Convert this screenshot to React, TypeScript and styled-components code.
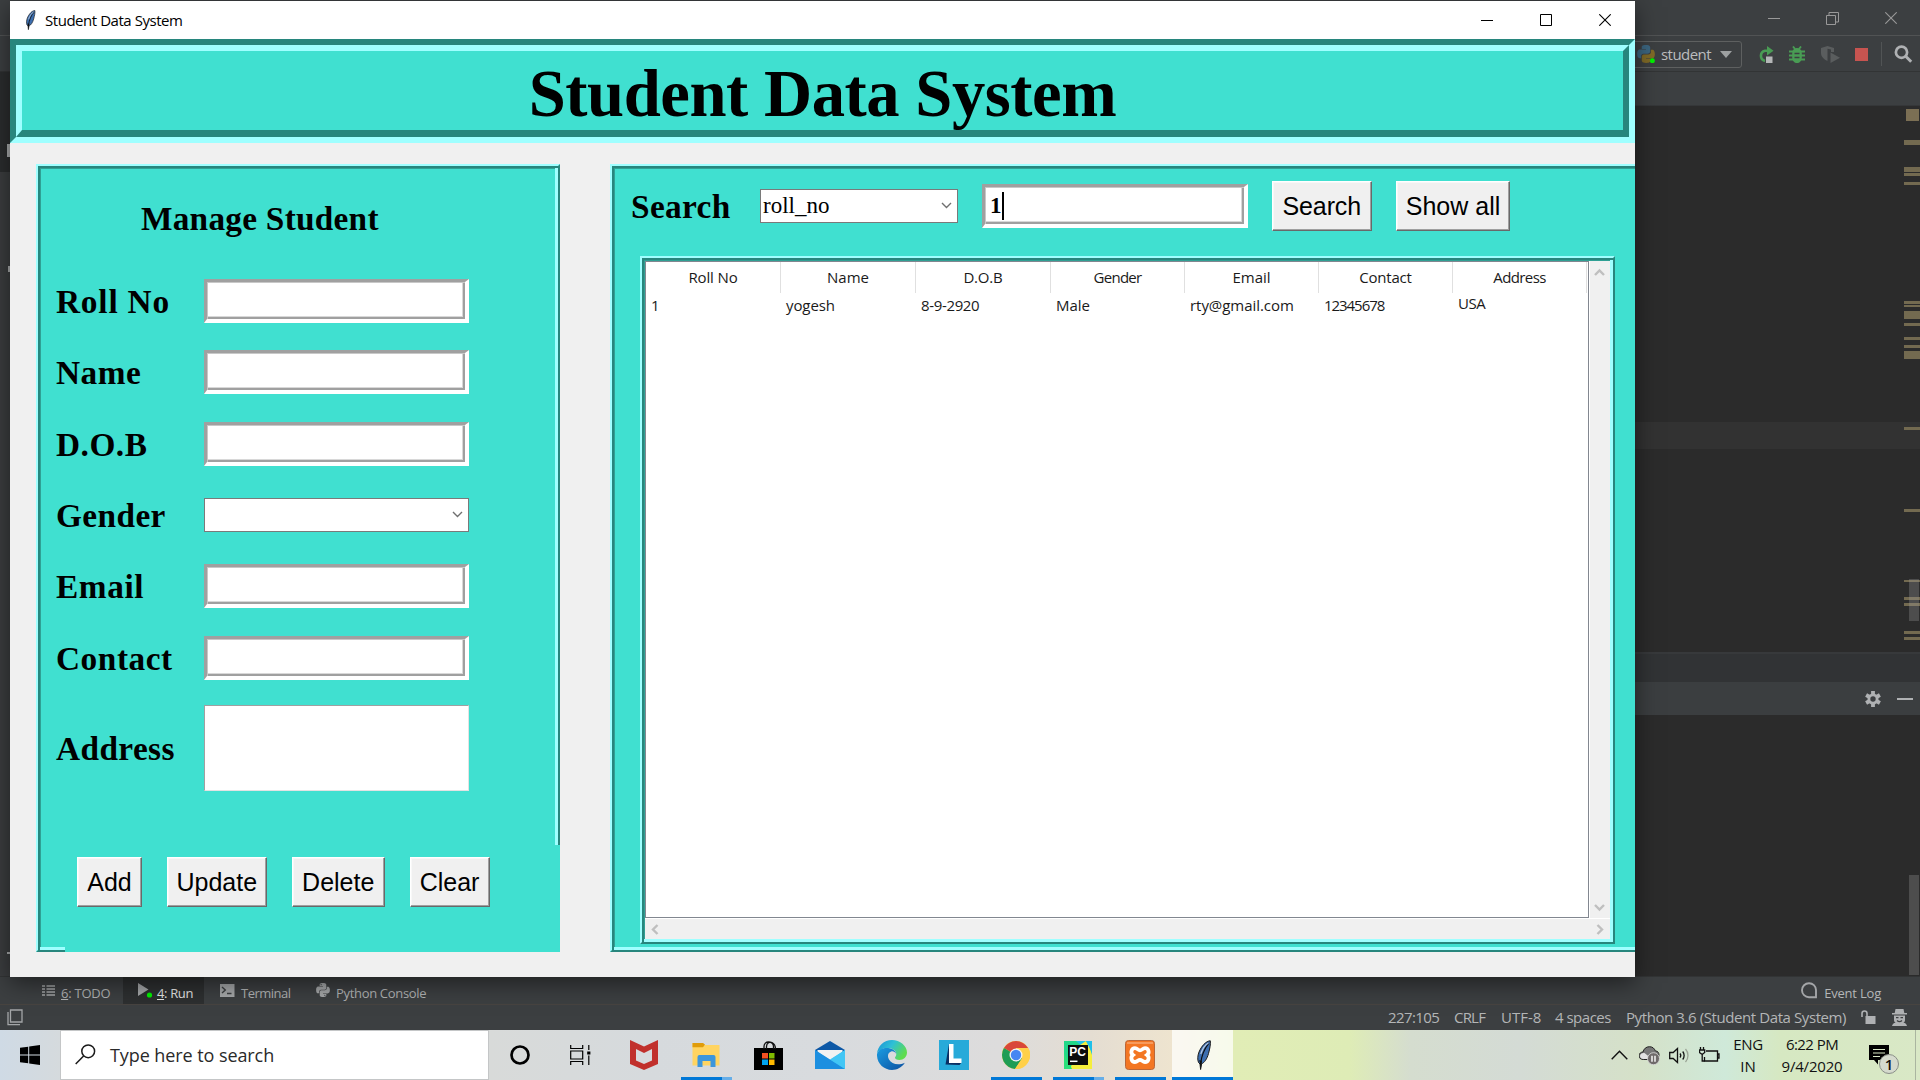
import React from 'react';
import styled, { createGlobalStyle, css } from 'styled-components';

const UI = '"Open Sans", "Noto Sans", sans-serif';
const SERIF = '"Liberation Serif", "Times New Roman", serif';
const SANS = '"Liberation Sans", Arial, sans-serif';
const TEAL = '#40e0d0';
const TEAL_DARK = '#27867d';
const TEAL_LIGHT = '#9fffff';

const Global = createGlobalStyle`
  *, *::before, *::after { box-sizing: border-box; }
  html, body { margin: 0; padding: 0; }
  body { width: 1920px; height: 1080px; overflow: hidden; background: #2b2b2b; }
  svg { display: block; flex: none; }
`;

const Text = styled.span<{ $ls?: number }>`
  display: block;
  flex: none;
  white-space: pre;
  letter-spacing: ${(p) => p.$ls ?? 0}px;
`;

/* ---------- Desktop ---------- */

const Desktop = styled.div`
  position: relative;
  width: 1920px;
  height: 1080px;
  display: flex;
  flex-direction: column;
  overflow: hidden;
`;

/* ---------- IDE behind the window ---------- */

const Ide = styled.div`
  height: 1030px;
  display: flex;
  flex-direction: column;
  background: #3c3f41;
  font-family: ${UI};
  color: #b4b6b7;
`;

const IdeTitle = styled.div`
  height: 36px;
  border-bottom: 1px solid #515354;
  display: flex;
  justify-content: flex-end;
  padding: 12px 23px 0 0;
  gap: 46px;
`;

const IdeToolbar = styled.div`
  height: 36px;
  border-bottom: 1px solid #323435;
  display: flex;
  align-items: center;
  justify-content: flex-end;
  padding: 1px 7px 0 0;
`;

const RunConfig = styled.div`
  width: 130px;
  height: 27px;
  border: 1px solid #5e6060;
  border-radius: 3px;
  display: flex;
  align-items: center;
  justify-content: flex-end;
  padding-right: 9px;
  font-size: 15px;
  line-height: 20px;
  margin-right: 15px;
  color: #bbbdbe;
`;

const ToolIcon = styled.div<{ $w: number; $gap?: number }>`
  width: ${(p) => p.$w}px;
  margin-right: ${(p) => p.$gap ?? 0}px;
  flex: none;
`;

const ToolSeparator = styled.div`
  width: 1px;
  height: 24px;
  background: #515455;
  margin-right: 12px;
`;

const IdeTabs = styled.div`
  height: 34px;
  border-bottom: 1px solid #353739;
`;

const IdeMain = styled.div`
  height: 870px;
  display: flex;
`;

const LeftStripe = styled.div`
  width: 10px;
  margin-top: -34px;
  background: #3b3d3f;
  display: flex;
  flex-direction: column;
  align-items: flex-end;
`;

const StripeSelected = styled.div`
  width: 10px;
  height: 100px;
  background: #2b2d2e;
  display: flex;
  align-items: flex-end;
  justify-content: flex-end;
  padding-bottom: 15px;
`;

const StripeGlyph = styled.div<{ $w: number; $h: number; $mt: number }>`
  width: ${(p) => p.$w}px;
  height: ${(p) => p.$h}px;
  margin-top: ${(p) => p.$mt}px;
  background: #aaacad;
`;

const IdeColumn = styled.div`
  flex: 1;
  display: flex;
  flex-direction: column;
`;

const Editor = styled.div`
  position: relative;
  height: 546px;
  background: #2b2b2b;
  padding-top: 316px;
`;

const CaretLine = styled.div`
  height: 27px;
  background: #323232;
`;

const Mark = styled.div<{ $y: number; $h: number }>`
  position: absolute;
  right: 0;
  top: ${(p) => p.$y - 106}px;
  width: 16px;
  height: ${(p) => p.$h}px;
  background: #736a50;
`;

const StatusSquare = styled.div`
  position: absolute;
  right: 1px;
  top: 3px;
  width: 13px;
  height: 12px;
  background: #7b6f54;
`;

const EditorThumb = styled.div`
  position: absolute;
  right: 1px;
  top: 473px;
  width: 10px;
  height: 42px;
  background: rgba(166, 166, 166, 0.28);
`;

const RunTabs = styled.div`
  height: 30px;
  border-top: 2px solid #37393b;
  background: #313335;
`;

const RunHeader = styled.div`
  height: 33px;
  background: #3b3e40;
  display: flex;
  align-items: center;
  justify-content: flex-end;
  gap: 16px;
  padding: 1px 7px 0 0;
`;

const Console = styled.div`
  flex: 1;
  background: #2b2b2b;
  display: flex;
  justify-content: flex-end;
  align-items: flex-end;
  padding: 0 1px 1px 0;
`;

const ConsoleThumb = styled.div`
  width: 10px;
  height: 100px;
  background: #4d4d4d;
`;

const ToolTabs = styled.div`
  height: 29px;
  border-top: 1px solid #323435;
  border-bottom: 1px solid #484440;
  display: flex;
  align-items: center;
  font-size: 13px;
  line-height: 18px;
  padding-left: 26px;
  padding-right: 39px;
`;

const ToolTab = styled.div<{ $w: number; $active?: boolean; $gap: number }>`
  width: ${(p) => p.$w}px;
  height: 27px;
  padding: 4px 0 0 ${(p) => (p.$active ? 15 : 16)}px;
  display: flex;
  align-items: center;
  gap: ${(p) => p.$gap}px;
  background: ${(p) => (p.$active ? '#2d2f30' : 'transparent')};
  color: ${(p) => (p.$active ? '#e4e4e4' : '#b0b2b3')};
`;

const TabIcon = styled.div`
  margin-top: -5px;
`;

const EventLog = styled.div`
  margin-left: auto;
  display: flex;
  align-items: center;
  gap: 6px;
  padding-top: 4px;
`;

const StatusBar = styled.div`
  height: 25px;
  display: flex;
  align-items: center;
  font-size: 15px;
  line-height: 20px;
  padding: 0 12px 1px 7px;
`;

const StatusItem = styled(Text)<{ $w: number }>`
  width: ${(p) => p.$w}px;
`;

const Fill = styled.div`
  flex: 1;
`;

/* ---------- Tk window ---------- */

const Window = styled.div`
  position: absolute;
  left: 10px;
  top: 1px;
  width: 1625px;
  height: 976px;
  background: #f0f0f0;
  display: flex;
  flex-direction: column;
  overflow: hidden;
`;

const WindowShadow = styled.div`
  position: absolute;
  left: 10px;
  top: 1px;
  width: 1625px;
  height: 976px;
  box-shadow: 0 6px 22px rgba(0, 0, 0, 0.5);
`;

const TitleBar = styled.div`
  height: 38px;
  flex: none;
  background: #fff;
  display: flex;
  align-items: center;
  padding: 0 24px 1px 14px;
  font: 15px/20px ${UI};
  color: #000;
`;

const WindowControls = styled.div`
  margin-left: auto;
  display: flex;
  align-items: center;
  gap: 47px;
  padding-top: 1px;
`;

const Banner = styled.div`
  height: 104px;
  flex: none;
  border: 6px solid;
  border-color: ${TEAL_DARK} ${TEAL_LIGHT} ${TEAL_LIGHT} ${TEAL_DARK};
`;

const BannerInner = styled.div`
  height: 92px;
  border: 6px solid;
  border-color: ${TEAL_LIGHT} ${TEAL_DARK} ${TEAL_DARK} ${TEAL_LIGHT};
  border-bottom-width: 7px;
  background: ${TEAL};
  display: flex;
  align-items: center;
  justify-content: center;
  padding-top: 6px;
  font: bold 66.67px/72px ${SERIF};
  color: #000;
`;

const Panels = styled.div`
  flex: 1;
  display: flex;
  gap: 50px;
  padding: 21px 0 0 26px;
`;

const ridge = css`
  border: 2px solid;
  border-color: ${TEAL_LIGHT} ${TEAL_DARK} ${TEAL_DARK} ${TEAL_LIGHT};
  box-shadow: inset 2px 2px 0 ${TEAL_DARK}, inset -3px -3px 0 ${TEAL_LIGHT}, inset 3px 3px 0 #2fa094;
  background: ${TEAL};
`;

const ManagePanel = styled.div`
  ${ridge}
  width: 524px;
  height: 788px;
  flex: none;
  display: flex;
  flex-direction: column;
  font: bold 33.33px/38px ${SERIF};
  color: #000;
`;

const PanelTitle = styled.div`
  height: 99.3px;
  display: flex;
  align-items: center;
  padding: 6px 0 0 103px;
`;

const FormRow = styled.div<{ $h?: number }>`
  height: ${(p) => p.$h ?? 71.35}px;
  flex: none;
  display: flex;
  align-items: center;
  padding-left: 18px;
`;

const FormLabel = styled.div`
  width: 148px;
  flex: none;
  padding-top: 2px;
`;

const Entry = styled.div<{ $w?: number }>`
  width: ${(p) => p.$w ?? 265}px;
  height: 44px;
  flex: none;
  background: #fff;
  border: solid;
  border-width: 3px 4px 4px 3px;
  border-color: #a0a0a0 #fff #fff #a0a0a0;
  box-shadow: inset 1px 1px 0 #c8c8c8, inset -2px -2px 0 #a0a0a0, inset -3px -3px 0 #d8d8d8;
  display: flex;
  align-items: center;
  padding-left: 5px;
  font: bold 23px/26px ${SERIF};
`;

const Caret = styled.div`
  width: 2px;
  height: 28px;
  background: #000;
`;

const Combo = styled.div<{ $w: number }>`
  width: ${(p) => p.$w}px;
  height: 34px;
  flex: none;
  border: 1px solid #7a7a7a;
  background: #fff;
  display: flex;
  align-items: center;
  justify-content: space-between;
  padding: 0 5px 1px 2px;
  font: 23px/26px ${SERIF};
`;

const TextArea = styled.div`
  width: 265px;
  height: 86px;
  background: #fff;
  border: 1px solid;
  border-color: #a0a0a0 #e3e3e3 #e3e3e3 #a0a0a0;
`;

const ButtonFrame = styled.div`
  height: 107px;
  margin: auto -2px -2px 27px;
  background: ${TEAL};
  display: flex;
  gap: 24.5px;
  padding: 12px 0 0 12px;
`;

const Button = styled.div<{ $w: number }>`
  width: ${(p) => p.$w}px;
  height: 50px;
  flex: none;
  background: #f0f0f0;
  border: solid;
  border-width: 1px 1px 1px 1px;
  border-color: #fff #696969 #696969 #fff;
  box-shadow: inset -1px -1px 0 #a0a0a0, inset 1px 1px 0 #f8f8f8;
  display: flex;
  align-items: center;
  justify-content: center;
  font: 25px/28px ${SANS};
  color: #000;
`;

const DetailPanel = styled.div`
  ${ridge}
  width: 1040px;
  height: 788px;
  flex: none;
`;

const SearchBar = styled.div`
  height: 80px;
  display: flex;
  align-items: center;
  padding-left: 19px;
  font: bold 33.33px/38px ${SERIF};
  color: #000;
`;

const SearchLabel = styled.div`
  width: 129px;
  padding-top: 2px;
`;

const Gap = styled.div<{ $w: number }>`
  width: ${(p) => p.$w}px;
  flex: none;
`;

const TableFrame = styled.div`
  ${ridge}
  width: 975px;
  height: 688px;
  margin: 10px 0 0 28px;
  padding: 3px;
  display: grid;
  grid-template-columns: 944px 21px;
  grid-template-rows: 657px 21px;
`;

const Tree = styled.div`
  border: 1px solid #828790;
  background: #fff;
  font: 15px/20px ${UI};
  color: #1a1a1a;
`;

const TreeRow = styled.div<{ $h: number }>`
  display: grid;
  grid-template-columns: repeat(3, 135px) repeat(4, 134px);
  height: ${(p) => p.$h}px;
`;

const HeadCell = styled.div`
  border-right: 1px solid #e0e0e0;
  display: flex;
  align-items: center;
  justify-content: center;
  padding-bottom: 2px;
`;

const Cell = styled.div<{ $raise?: boolean }>`
  display: flex;
  align-items: center;
  padding: 0 0 ${(p) => (p.$raise ? 7 : 3)}px 5px;
`;

const VScroll = styled.div`
  background: #f0f0f0;
  border-left: 1px solid #fff;
  display: flex;
  flex-direction: column;
  align-items: center;
  justify-content: space-between;
  padding: 6px 1px 5px 0;
`;

const HScroll = styled.div`
  grid-column: 1 / 3;
  background: #f0f0f0;
  border-top: 1px solid #fff;
  display: flex;
  align-items: center;
  justify-content: space-between;
  padding: 0 5px;
`;

/* ---------- Taskbar ---------- */

const Taskbar = styled.div`
  position: relative;
  height: 50px;
  display: flex;
  align-items: stretch;
  font: 15px/20px ${UI};
  color: #111;
  background: linear-gradient(90deg, #cfdae5 0, #d5dadd 60px, #d8dad9 490px, #d6dadd 650px, #d8dbde 820px, #dddcdc 1000px,
    #e4ddd2 1090px, #eee4cf 1172px, #e1edb6 1234px, #deecb6 1350px, #d5ddcf 1410px, #d4dbd5 1520px, #d5e1c8 1640px,
    #cfe9d9 1725px, #d6e8c2 1780px, #d9e8c6 1920px);
`;

const StartButton = styled.div`
  width: 60px;
  display: flex;
  align-items: center;
  justify-content: center;
`;

const SearchBox = styled.div`
  width: 429px;
  background: #fff;
  border: 1px solid #c4c6c7;
  display: flex;
  align-items: center;
  padding: 0 0 1px 14px;
  gap: 14px;
  font-size: 18px;
  line-height: 24px;
  color: #2a2a2a;
`;

const Task = styled.div<{ $active?: boolean }>`
  width: ${(p) => (p.$active ? 61 : 62)}px;
  flex: none;
  display: flex;
  flex-direction: column;
  align-items: center;
  justify-content: space-between;
  background: ${(p) => (p.$active ? 'rgba(255,255,255,0.72)' : 'transparent')};
`;

const TaskIcon = styled.div`
  height: 47px;
  display: flex;
  align-items: center;
  padding-top: 3px;
`;

const Underline = styled.div<{ $kind?: 'one' | 'many' | 'full' }>`
  height: 3px;
  width: ${(p) => (p.$kind === 'full' ? 61 : 51)}px;
  background: ${(p) =>
    !p.$kind ? 'transparent' : p.$kind === 'many' ? 'linear-gradient(90deg, #0078d7 41px, #66aee8 41px)' : '#0078d7'};
`;

const Tray = styled.div`
  margin-left: auto;
  display: flex;
  align-items: center;
  padding-right: 4px;
`;

const TrayStack = styled.div<{ $w: number }>`
  width: ${(p) => p.$w}px;
  display: flex;
  flex-direction: column;
  align-items: center;
  gap: 2px;
  margin-top: -1px;
`;

const Notify = styled.div`
  position: relative;
  width: 31px;
  height: 36px;
  margin-right: 15px;
`;

const Badge = styled.div`
  position: absolute;
  left: 10px;
  top: 17px;
  width: 20px;
  height: 20px;
  border-radius: 50%;
  border: 1px solid #8a8f88;
  background: #d5dacd;
  font-size: 15px;
  font-weight: 600;
  line-height: 18px;
  text-align: center;
`;

const ShowDesktop = styled.div`
  width: 1px;
  height: 50px;
  background: #aab5a0;
`;

/* ---------- Icons ---------- */

const Feather = ({ w, h }: { w: number; h: number }) => (
  <svg width={w} height={h} viewBox="0 0 16 30">
    <path d="M15.300.8C11 1 6.500 6 4 12c-1.500 4-1.600 7.500-.5 10.500L5 24l.6 5.500.9-5.500c3-1.500 5.500-5 7-10.500 1.300-5 2.300-9 1.800-12.700z" fill="#3d6fb0" stroke="#1a1a1a" strokeWidth="1" />
    <path d="M14 3C10 8 6.500 15 5.600 24" stroke="#0b0b0b" strokeWidth="1.200" fill="none" />
    <path d="M13.500 3c-3 1.500-6 5.500-7.700 11" stroke="#b9cbe2" strokeWidth="1.200" fill="none" />
    <path d="M4.300 20l1.500 9 1.200-8z" fill="#111" />
  </svg>
);

const Python = ({ size, color }: { size: number; color: string }) => (
  <svg width={size} height={size} viewBox="0 0 24 24">
    <path fill={color} d="M11.900 0C6 0 6.300 2.600 6.300 2.600v2.700H12v.8H4S.2 5.700.2 11.800s3.300 5.800 3.300 5.800h2v-2.800s-.1-3.300 3.300-3.300h5.600s3.200 0 3.200-3.100V3.200S18 0 11.900 0zM8.800 1.800a1 1 0 110 2.100 1 1 0 010-2.100z" />
    <path fill={color} d="M12.100 24c5.900 0 5.600-2.600 5.600-2.600v-2.700H12v-.8h8s3.800.4 3.800-5.700-3.300-5.800-3.300-5.800h-2v2.800s.1 3.300-3.300 3.300H9.600s-3.200 0-3.200 3.100v5.200S6 24 12.100 24zm3.100-1.800a1 1 0 110-2.100 1 1 0 010 2.100z" />
  </svg>
);

const Chevron = ({ dir, color = '#bfbfbf', w = 2.4 }: { dir: 'up' | 'down' | 'left' | 'right'; color?: string; w?: number }) => {
  const d = { up: 'M1 8L5.500 3.500 10 8', down: 'M1 3L5.500 7.500 10 3', left: 'M7.500 1L3 5.500 7.500 10', right: 'M3.500 1L8 5.500 3.500 10' }[dir];
  return (
    <svg width="11" height="11" viewBox="0 0 11 11">
      <path d={d} fill="none" stroke={color} strokeWidth={w} />
    </svg>
  );
};

const Minimize = ({ c }: { c: string }) => (
  <svg width="12" height="12" viewBox="0 0 12 12"><path d="M0 6.500h12" stroke={c} /></svg>
);
const Close = ({ c }: { c: string }) => (
  <svg width="12" height="12" viewBox="0 0 12 12"><path d="M.3.3l11.400 11.400M11.700.3L.3 11.700" stroke={c} strokeWidth="1.100" /></svg>
);

/* ---------- Data ---------- */

const marks: [number, number][] = [
  [140, 5], [167, 5], [173, 3], [182, 3], [301, 3], [305, 2], [311, 8], [323, 3], [337, 3], [345, 3],
  [351, 8], [427, 3], [509, 3], [580, 2], [597, 3], [603, 3], [631, 3], [637, 3],
];

const columns: [string, number][] = [
  ['Roll No', -0.15], ['Name', 0], ['D.O.B', -0.2], ['Gender', -0.75], ['Email', 0], ['Contact', -0.2], ['Address', -0.6],
];

const student: [string, number][] = [
  ['1', 0], ['yogesh', -0.1], ['8-9-2920', -0.35], ['Male', 0], ['rty@gmail.com', -0.05], ['12345678', -1.05], ['USA', -0.5],
];

export default function App() {
  return (
    <Desktop>
      <Global />
      <Ide>
        <IdeTitle>
          <Minimize c="#999" />
          <svg width="13" height="13" viewBox="0 0 13 13" fill="none" stroke="#999">
            <path d="M.5 3.500h9v9h-9zM3 3.500V.5h9.500V10h-3" />
          </svg>
          <Close c="#999" />
        </IdeTitle>
        <IdeToolbar>
          <RunConfig>
            <ToolIcon $w={18} $gap={6}>
              <svg width="18" height="18" viewBox="0 0 24 24">
                <path fill="#3c6680" d="M11.900 0C6 0 6.300 2.600 6.300 2.600v2.700H12v.8H4S.2 5.700.2 11.800s3.300 5.800 3.300 5.800h2v-2.800s-.1-3.300 3.300-3.300h5.600s3.200 0 3.200-3.100V3.200S18 0 11.900 0z" />
                <path fill="#806a27" d="M12.100 24c5.900 0 5.600-2.600 5.600-2.600v-2.700H12v-.8h8s3.800.4 3.800-5.700-3.300-5.800-3.300-5.800h-2v2.800s.1 3.300-3.300 3.300H9.600s-3.200 0-3.200 3.100v5.200S6 24 12.100 24z" />
                <circle cx="20.500" cy="21" r="3.300" fill="#00f000" />
              </svg>
            </ToolIcon>
            <Text $ls={-0.55}>student</Text>
            <Gap $w={9} />
            <svg width="12" height="7" viewBox="0 0 12 7"><path d="M0 0h12L6 7z" fill="#9da0a1" /></svg>
          </RunConfig>
          <ToolIcon $w={17} $gap={15}>
            <svg width="17" height="17" viewBox="0 0 17 17">
              <path d="M8 15A5.300 5.300 0 018 4.700h3" fill="none" stroke="#499c54" strokeWidth="2.600" />
              <path d="M10 0l6.500 4.700L10 9.400z" fill="#499c54" />
              <rect x="9" y="10.500" width="6.500" height="6.500" fill="#b5b7b8" />
            </svg>
          </ToolIcon>
          <ToolIcon $w={16} $gap={16}>
            <svg width="16" height="17" viewBox="0 0 16 17">
              <path d="M4 .5l2 2.500M12 .5L10 3M0 5.500h16M0 9.500h16M0 13.500h16" stroke="#499c54" strokeWidth="1.900" />
              <path d="M8 2c3 0 4.800 2 4.800 5v4.500C12.800 15 10.500 17 8 17s-4.800-2-4.800-5.500V7c0-3 1.800-5 4.800-5z" fill="#499c54" />
              <path d="M5.500 7.500h5M5.500 11.500h5" stroke="#3c3f41" strokeWidth="1.500" />
            </svg>
          </ToolIcon>
          <ToolIcon $w={19} $gap={15}>
            <svg width="19" height="17" viewBox="0 0 19 17">
              <path d="M0 2l6.500-2L13 2v4h-3V3.500L6.500 2.700V15C2.500 13 0 10.500 0 7z" fill="#5a5d5e" />
              <path d="M9.500 6.500L19 11.700 9.500 17z" fill="#5a5d5e" />
            </svg>
          </ToolIcon>
          <ToolIcon $w={13} $gap={13}>
            <svg width="13" height="13" viewBox="0 0 13 13"><rect width="13" height="13" fill="#c75450" /></svg>
          </ToolIcon>
          <ToolSeparator />
          <svg width="19" height="18" viewBox="0 0 19 18">
            <circle cx="7.500" cy="7.200" r="5.600" fill="none" stroke="#afb1b3" strokeWidth="2.700" />
            <path d="M11.700 11.200l5.500 5.500" stroke="#afb1b3" strokeWidth="3" />
          </svg>
        </IdeToolbar>
        <IdeTabs />
        <IdeMain>
          <LeftStripe>
            <StripeSelected><StripeGlyph $w={3} $h={13} $mt={0} /></StripeSelected>
            <StripeGlyph $w={2} $h={6} $mt={94} />
            <StripeGlyph $w={3} $h={2} $mt={680} />
          </LeftStripe>
          <IdeColumn>
            <Editor>
              <CaretLine />
              <StatusSquare />
              {marks.map(([y, h]) => <Mark key={y} $y={y} $h={h} />)}
              <EditorThumb />
            </Editor>
            <RunTabs />
            <RunHeader>
              <svg width="16" height="16" viewBox="0 0 16 16">
                <g stroke="#afb1b3" strokeWidth="3.800">
                  <path d="M8 0v16M1.100 4l13.800 8M1.100 12l13.800-8" />
                </g>
                <circle cx="8" cy="8" r="5.500" fill="#afb1b3" />
                <circle cx="8" cy="8" r="2.700" fill="#3b3e40" />
              </svg>
              <svg width="16" height="2" viewBox="0 0 16 2"><path d="M0 1h16" stroke="#afb1b3" strokeWidth="2" /></svg>
            </RunHeader>
            <Console><ConsoleThumb /></Console>
          </IdeColumn>
        </IdeMain>
        <ToolTabs>
          <ToolTab $w={97} $gap={6}>
            <TabIcon>
              <svg width="13" height="11" viewBox="0 0 13 11">
                <path d="M0 1h3M4.500 1H13M0 4h3M4.500 4H13M0 7h3M4.500 7H13M0 10h3M4.500 10H13" stroke="#a4a6a8" strokeWidth="1.700" />
              </svg>
            </TabIcon>
            <Text $ls={-0.25}><u>6</u>: TODO</Text>
          </ToolTab>
          <ToolTab $w={81} $gap={4} $active>
            <TabIcon>
              <svg width="15" height="15" viewBox="0 0 15 15">
                <path d="M0 0l10.500 6.500L0 13z" fill="#a4a6a8" />
                <circle cx="11.500" cy="12" r="2.600" fill="#00f000" />
              </svg>
            </TabIcon>
            <Text $ls={-0.35}><u>4</u>: Run</Text>
          </ToolTab>
          <ToolTab $w={96} $gap={6}>
            <TabIcon>
              <svg width="15" height="13" viewBox="0 0 15 13">
                <rect x="-1" width="15.500" height="13" fill="#a4a6a8" />
                <path d="M2 3l3.300 3L2 9M7 9.500h4.500" fill="none" stroke="#3c3f41" strokeWidth="1.400" />
              </svg>
            </TabIcon>
            <Text $ls={-0.5}>Terminal</Text>
          </ToolTab>
          <ToolTab $w={130} $gap={6}>
            <TabIcon><Python size={14} color="#a4a6a8" /></TabIcon>
            <Text $ls={-0.32}>Python Console</Text>
          </ToolTab>
          <EventLog>
            <TabIcon>
              <svg width="17" height="17" viewBox="0 0 17 17">
                <path d="M8 1.200a6.800 6.800 0 100 14h7V8A6.900 6.900 0 008 1.200z" fill="none" stroke="#a4a6a8" strokeWidth="1.900" />
              </svg>
            </TabIcon>
            <Text $ls={-0.2}>Event Log</Text>
          </EventLog>
        </ToolTabs>
        <StatusBar>
          <svg width="16" height="17" viewBox="0 0 16 17" fill="none" stroke="#a4a6a8">
            <path d="M3.500 1h11.500v12H3.500z" strokeWidth="1.300" />
            <path d="M1 3v12.700h12" strokeWidth="1.300" />
          </svg>
          <Fill />
          <StatusItem $w={66} $ls={-0.6}>227:105</StatusItem>
          <StatusItem $w={47} $ls={-0.8}>CRLF</StatusItem>
          <StatusItem $w={54} $ls={0}>UTF-8</StatusItem>
          <StatusItem $w={71} $ls={-0.5}>4 spaces</StatusItem>
          <StatusItem $w={235} $ls={-0.41}>Python 3.6 (Student Data System)</StatusItem>
          <ToolIcon $w={15} $gap={15}>
            <svg width="15" height="14" viewBox="0 0 15 14">
              <rect x="4.500" y="6" width="10" height="8" fill="#afb1b3" />
              <path d="M1 7V3.500a2.500 2.500 0 015 0V6" fill="none" stroke="#afb1b3" strokeWidth="1.600" />
            </svg>
          </ToolIcon>
          <svg width="17" height="17" viewBox="0 0 17 17" fill="#afb1b3">
            <path d="M4.500 0h8l.8 4H16v1.500H1V4h2.700z" />
            <path d="M3 6.500h11V11c0 2.500-2.500 4-5.500 4S3 13.500 3 11z" />
            <path d="M1 17c.5-2 1.500-3 3.500-3.200h8c2 .2 3 1.200 3.500 3.200z" />
            <path d="M5 8.700h2.500M9.500 8.700H12M6 11.500c1.500 1.300 3.500 1.300 5 0" stroke="#3c3f41" strokeWidth="1.300" fill="none" />
          </svg>
        </StatusBar>
      </Ide>

      <WindowShadow />

      <Taskbar>
        <StartButton>
          <svg width="20" height="20" viewBox="0 0 20 20">
            <path d="M0 2.800l8.200-1.100v7.800H0zM9.200 1.500L20 0v9.500H9.200zM0 10.500h8.200v7.800L0 17.200zM9.200 10.500H20V20L9.200 18.500z" fill="#000" />
          </svg>
        </StartButton>
        <SearchBox>
          <svg width="21" height="21" viewBox="0 0 21 21" fill="none" stroke="#1a1a1a" strokeWidth="1.500">
            <circle cx="13.200" cy="7.300" r="6.400" />
            <path d="M8.600 12L.7 20" />
          </svg>
          <Text $ls={-0.08}>Type here to search</Text>
        </SearchBox>
        <Task>
          <TaskIcon>
            <svg width="20" height="20" viewBox="0 0 20 20"><circle cx="10" cy="10" r="8.500" fill="none" stroke="#000" strokeWidth="2.700" /></svg>
          </TaskIcon>
          <Underline />
        </Task>
        <Task>
          <TaskIcon>
            <svg width="24" height="20" viewBox="1 0 24 20">
              <path d="M.7 0v3.500h12V0M.7 20v-3.500h12V20M.7 6h12v8H.7zM18.800 0v5M18.800 10.500V20" transform="translate(1 0)" fill="none" stroke="#000" strokeWidth="1.200" />
              <rect x="18.200" y="6.500" width="3.200" height="3" fill="#000" />
            </svg>
          </TaskIcon>
          <Underline />
        </Task>
        <Task>
          <TaskIcon>
            <svg width="28" height="30" viewBox="0 0 28 30">
              <path d="M0 0l14 6.500L28 0v24l-14 6-14-6z" fill="#c1302c" />
              <path d="M6 9l8 4 8-4v11.500L14 24l-8-3.500z" fill="#d8dbde" />
            </svg>
          </TaskIcon>
          <Underline />
        </Task>
        <Task>
          <TaskIcon>
            <svg width="28" height="24" viewBox="0 0 28 24">
              <path d="M.5 0h10l2 2h15v20.500H.5z" fill="#ffd461" />
              <path d="M.5 0h10.500l2 1.500-2 2.800H.5z" fill="#e09c0a" />
              <path d="M5.500 24V14q0-2 2-2h14q2 0 2 2v10h-5v-6h-8v6z" fill="#3c96dc" />
            </svg>
          </TaskIcon>
          <Underline $kind="many" />
        </Task>
        <Task>
          <TaskIcon>
            <svg width="29" height="29" viewBox="0 0 29 29">
              <path d="M0 7h29v22H0z" fill="#000" />
              <path d="M10 8V5.500C10 2.500 12 1 14.500 1s5 1.500 5 4.500V8M12.500 8V5.500C12.500 2 16 .5 18 1.500s3.500 2 3.500 6.500" fill="none" stroke="#111" strokeWidth="1.300" />
              <path fill="#f25022" d="M8 12h6v5.500H8z" /><path fill="#7fba00" d="M15 12h5.500v5.500H15z" />
              <path fill="#00a4ef" d="M8 18.500h6V24H8z" /><path fill="#ffb900" d="M15 18.500h5.500V24H15z" />
            </svg>
          </TaskIcon>
          <Underline />
        </Task>
        <Task>
          <TaskIcon>
            <svg width="30" height="28" viewBox="0 0 30 28">
              <path d="M0 9L15 0l15 9v3H0z" fill="#0d58a6" />
              <path d="M2.500 9h25v10h-25z" fill="#f2f2f2" />
              <path d="M0 9l15 10L30 9v19H0z" fill="#33b9f0" />
              <path d="M0 9l30 19H0z" fill="#1c8fe0" />
              <path d="M15 18.500L30 9v19z" fill="#42c6f5" />
            </svg>
          </TaskIcon>
          <Underline />
        </Task>
        <Task>
          <TaskIcon>
            <svg width="30" height="30" viewBox="0 0 30 30">
              <defs>
                <linearGradient id="edgeTop" x1="0" y1="0" x2="1" y2=".5"><stop offset="0" stopColor="#1a8fd6" /><stop offset=".5" stopColor="#2fc0d6" /><stop offset="1" stopColor="#5fdc4f" /></linearGradient>
                <linearGradient id="edgeLow" x1="0" y1="0" x2="1" y2="1"><stop offset="0" stopColor="#1a9de2" /><stop offset="1" stopColor="#0c4fa0" /></linearGradient>
              </defs>
              <path d="M0 14C.5 6 7 0 15 0s15 6 15 12.500c0 4.500-3.500 7.500-7.500 7.500-3 0-4.500-1-4.500-2.200 0-1 1.300-1.500 1.300-3.800C19.300 10.500 15 8 11 8 5 8 1 11 0 14z" fill="url(#edgeTop)" />
              <path d="M0 14C1.500 9.500 6 7.500 11 8c4.500.5 8 3 8.200 6-1-2-3-3-5-2.500-3.500 1-4 5-2.200 8 2.500 4.500 9 6.500 15.800 3.300C25 27.500 20 30 15 30 6.500 30-.5 23 0 14z" fill="url(#edgeLow)" />
            </svg>
          </TaskIcon>
          <Underline />
        </Task>
        <Task>
          <TaskIcon>
            <svg width="30" height="30" viewBox="0 0 30 30">
              <path d="M0 0h30v30H0z" fill="#27aad9" />
              <path d="M10 4L6.500 24.500l14 .5 2-2.500-12.500-1z" fill="#0b2f63" />
              <path d="M10 4h4.500v14.500h8V23H10z" fill="#fff" />
            </svg>
          </TaskIcon>
          <Underline />
        </Task>
        <Task>
          <TaskIcon>
            <svg width="28" height="28" viewBox="0 0 28 28">
              <circle cx="14" cy="14" r="14" fill="#ffd04a" />
              <path d="M14 14L1.900 7A14 14 0 0126.100 7H14z" fill="#d9473a" />
              <path d="M1.900 7A14 14 0 0013 28l7-10.500-6-3.500z" fill="#1f9d55" />
              <path d="M14 7h12.100A14 14 0 0113 28l7-10.500z" fill="#ffd04a" />
              <circle cx="14" cy="14" r="6.500" fill="#f4f4f4" />
              <circle cx="14" cy="14" r="5.200" fill="#4787f2" />
            </svg>
          </TaskIcon>
          <Underline $kind="one" />
        </Task>
        <Task>
          <TaskIcon>
            <svg width="28" height="28" viewBox="0 0 28 28">
              <path d="M0 0h28v28H0z" fill="#21d789" />
              <path d="M12 0h16v14z" fill="#22c3e6" />
              <path d="M16 4L22 0l3 4 3 10v14H6z" fill="#f5ee3c" />
              <path d="M22 0h6v12z" fill="#1fc0ea" />
              <path d="M0 28V12l8 16z" fill="#2adf7a" />
              <path d="M4 4h20v20H4z" fill="#0c0c0c" />
              <path d="M6 20.300h7.500" stroke="#fff" strokeWidth="1.500" />
              <text x="5.300" y="15.300" fontFamily="Liberation Sans, sans-serif" fontWeight="bold" fontSize="12" fill="#fff">PC</text>
            </svg>
          </TaskIcon>
          <Underline $kind="many" />
        </Task>
        <Task>
          <TaskIcon>
            <svg width="30" height="30" viewBox="0 0 30 30">
              <rect x=".5" y=".5" width="29" height="29" rx="3" fill="#f37623" stroke="#b9673a" />
              <path d="M2 2h26v2H2z" fill="#f79a5c" />
              <path d="M10 8.200c-3.500 0-5 4.500-2 6.800-3 2.300-1.500 7 2 7 2.500 0 3-2.200 5-2.200s2.500 2.200 5 2.200c3.500 0 5-4.700 2-7 3-2.300 1.500-6.800-2-6.800-2.500 0-3 2.200-5 2.200s-2.500-2.200-5-2.200z" fill="none" stroke="#fff" strokeWidth="3.800" />
            </svg>
          </TaskIcon>
          <Underline $kind="one" />
        </Task>
        <Gap $w={1} />
        <Task $active>
          <TaskIcon><Feather w={16} h={30} /></TaskIcon>
          <Underline $kind="full" />
        </Task>
        <Tray>
          <ToolIcon $w={17} $gap={11}>
            <svg width="17" height="10" viewBox="0 0 17 10"><path d="M.7 9.300L8.500 1.200l7.800 8.100" fill="none" stroke="#111" strokeWidth="1.400" /></svg>
          </ToolIcon>
          <ToolIcon $w={21} $gap={9}>
            <svg width="21" height="19" viewBox="0 0 21 19">
              <path d="M4.500 13.500C1.500 13.500 0 12 0 9.800 0 7.500 2 6 4 6c.7-3 3-5.300 6.500-5.300 3 0 5 1.800 5.800 4.200C19 5 20 7 20 9c0 2.500-2 4.500-4.500 4.500z" fill="#777" stroke="#222" />
              <path d="M4.500 13C2 13 1 11.500 1 10c0-2 2-3.500 4.500-3L13 12.900z" fill="#e2e2e2" />
              <circle cx="14.500" cy="12.700" r="6" fill="#6f6a6a" stroke="#ddd" strokeWidth=".8" />
              <path d="M13 9.700v6M16 9.700v6" stroke="#fff" strokeWidth="1.400" />
            </svg>
          </ToolIcon>
          <ToolIcon $w={21} $gap={9}>
            <svg width="21" height="17" viewBox="0 0 21 17" fill="none" stroke="#111" strokeWidth="1.300">
              <path d="M.7 5.500h3.500L8.500 1.500v14L4.200 11.500H.7z" />
              <path d="M11 6.500c.8 1 .8 3 0 4M13.700 4.500c1.900 2.200 1.900 5.800 0 8" />
              <path d="M16.500 2c3.300 3.500 3.300 9.500 0 13" stroke="#9aa294" />
            </svg>
          </ToolIcon>
          <ToolIcon $w={21} $gap={13}>
            <svg width="21" height="17" viewBox="0 0 21 17" fill="none" stroke="#111" strokeWidth="1.300">
              <path d="M7 4h11.500v10H5.500v-4M18.500 7H20v4h-1.500" />
              <path d="M1.500 0v3M4.500 0v3M.5 3h5.200v2.500L3.200 7.500.5 5.500zM3.200 7.500V14h2.500" />
            </svg>
          </ToolIcon>
          <TrayStack $w={30}>
            <Text $ls={-0.3}>ENG</Text>
            <Text>IN</Text>
          </TrayStack>
          <Gap $w={17} />
          <TrayStack $w={64}>
            <Text $ls={-0.55}>6:22 PM</Text>
            <Text $ls={-0.2}>9/4/2020</Text>
          </TrayStack>
          <Gap $w={25} />
          <Notify>
            <svg width="31" height="36" viewBox="0 0 31 36">
              <path d="M0 8h20v15H9v4.500L5 23H0z" fill="#000" />
              <path d="M4 12.500h12M4 16h12M4 19.500h7" stroke="#d9e8c6" strokeWidth="1.200" />
            </svg>
            <Badge>1</Badge>
          </Notify>
          <ShowDesktop />
        </Tray>
      </Taskbar>

      <Window>
        <TitleBar>
          <Feather w={12} h={20} />
          <Gap $w={9} />
          <Text $ls={-0.46}>Student Data System</Text>
          <WindowControls>
            <Minimize c="#000" />
            <svg width="12" height="12" viewBox="0 0 12 12"><path d="M.5.5h11v11H.5z" fill="none" stroke="#000" /></svg>
            <Close c="#000" />
          </WindowControls>
        </TitleBar>
        <Banner>
          <BannerInner><Text $ls={-0.46}>Student Data System</Text></BannerInner>
        </Banner>
        <Panels>
          <ManagePanel>
            <PanelTitle><Text $ls={0.25}>Manage Student</Text></PanelTitle>
            <FormRow><FormLabel><Text $ls={0.8}>Roll No</Text></FormLabel><Entry /></FormRow>
            <FormRow><FormLabel><Text $ls={0.5}>Name</Text></FormLabel><Entry /></FormRow>
            <FormRow><FormLabel><Text $ls={0.5}>D.O.B</Text></FormLabel><Entry /></FormRow>
            <FormRow><FormLabel><Text $ls={0.4}>Gender</Text></FormLabel><Combo $w={265}><span /><Chevron dir="down" color="#707070" w={1.4} /></Combo></FormRow>
            <FormRow><FormLabel><Text $ls={0.6}>Email</Text></FormLabel><Entry /></FormRow>
            <FormRow><FormLabel><Text $ls={0.55}>Contact</Text></FormLabel><Entry /></FormRow>
            <FormRow $h={109.4}><FormLabel><Text $ls={0.4}>Address</Text></FormLabel><TextArea /></FormRow>
            <ButtonFrame>
              <Button $w={65}>Add</Button>
              <Button $w={100.5}>Update</Button>
              <Button $w={93.5}>Delete</Button>
              <Button $w={80}>Clear</Button>
            </ButtonFrame>
          </ManagePanel>
          <DetailPanel>
            <SearchBar>
              <SearchLabel><Text $ls={0.35}>Search</Text></SearchLabel>
              <Combo $w={197.5}><Text>roll_no</Text><Chevron dir="down" color="#707070" w={1.4} /></Combo>
              <Gap $w={24.5} />
              <Entry $w={265.5}><Text>1</Text><Caret /></Entry>
              <Gap $w={24.500} />
              <Button $w={99.5}><Text $ls={-0.15}>Search</Text></Button>
              <Gap $w={24.5} />
              <Button $w={114}>Show all</Button>
            </SearchBar>
            <TableFrame>
              <Tree>
                <TreeRow $h={31}>
                  {columns.map(([t, ls]) => <HeadCell key={t}><Text $ls={ls}>{t}</Text></HeadCell>)}
                </TreeRow>
                <TreeRow $h={24}>
                  {student.map(([t, ls]) => <Cell key={t} $raise={t === 'USA'}><Text $ls={ls}>{t}</Text></Cell>)}
                </TreeRow>
              </Tree>
              <VScroll><Chevron dir="up" /><Chevron dir="down" /></VScroll>
              <HScroll><Chevron dir="left" /><Chevron dir="right" /></HScroll>
            </TableFrame>
          </DetailPanel>
        </Panels>
      </Window>
    </Desktop>
  );
}
